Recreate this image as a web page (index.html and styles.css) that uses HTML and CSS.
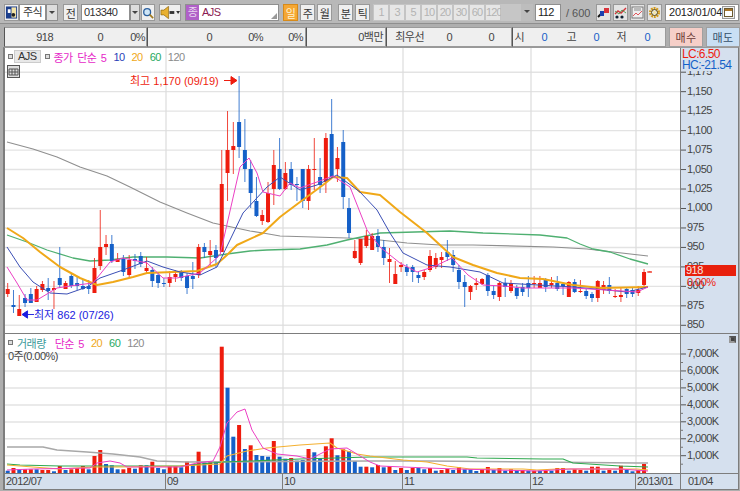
FILE: index.html
```html
<!DOCTYPE html>
<html lang="ko">
<head>
    <meta charset="UTF-8">
    <title>AJS 013340</title>
    <link rel="stylesheet" href="styles.css">
</head>
<body>
    <div class="toolbar">
        <button class="tool icon-book" title="종목">
            <svg width="14" height="15" viewBox="0 0 14 15"><rect x="1" y="1" width="12" height="13" fill="#1c3f8c"/><rect x="7" y="2" width="5" height="11" fill="#f4e3a6"/><path d="M3 4h3v4H3z" fill="#fff"/><circle cx="9" cy="10" r="2" fill="#222"/></svg>
        </button>
        <div class="field market">주식</div>
        <button class="arrow-btn market-arrow"></button>
        <button class="tool prev">전</button>
        <div class="field code">013340</div>
        <button class="arrow-btn code-arrow"></button>
        <button class="tool search">
            <svg width="14" height="14" viewBox="0 0 14 14"><circle cx="6" cy="6" r="4" fill="#cfe6f7" stroke="#2a5f9e" stroke-width="1.5"/><path d="M9 9l4 4" stroke="#a07a20" stroke-width="2"/></svg>
        </button>
        <button class="tool speaker">
            <svg width="21" height="13" viewBox="0 0 21 13"><path d="M1 4h3l5-4v13l-5-4H1z" fill="#e8b030" stroke="#8a6410" stroke-width=".7"/><path d="M10 5h5v3h-5z" fill="#333"/><path d="M17 5h4l-2 3z" fill="#333"/></svg>
        </button>
        <div class="field name"><span class="name-tag">종</span><span class="name-text">AJS</span><i class="grip"></i></div>
        <div class="periods">
            <button class="tool period on">일</button>
            <button class="tool period">주</button>
            <button class="tool period">월</button>
        </div>
        <div class="periods minutes">
            <button class="tool period">분</button>
            <button class="tool period">틱</button>
        </div>
        <div class="steps">
            <span>1</span><span>3</span><span>5</span><span>10</span><span>20</span><span>30</span><span>60</span><span>120</span>
        </div>
        <div class="step-box"></div>
        <button class="arrow-btn step-arrow"></button>
        <div class="field count">112</div>
        <span class="total">/ 600</span>
        <button class="tool small">
            <svg width="13" height="13" viewBox="0 0 13 13"><path d="M1 11l4-4" stroke="#111" stroke-width="2"/><rect x="3" y="5" width="4" height="5" fill="#1a3fb0"/><rect x="7" y="2" width="5" height="5" fill="#d8323a"/></svg>
        </button>
        <button class="tool small">
            <svg width="13" height="13" viewBox="0 0 13 13"><path d="M1 8l3-3 3 2 5-5" fill="none" stroke="#d8323a" stroke-width="1.4"/><path d="M1 5l4 3 3-4 4 3" fill="none" stroke="#3a8a3a" stroke-width=".8"/><circle cx="3" cy="11" r="1.6" fill="#123"/><circle cx="8" cy="11" r="1.6" fill="#123"/></svg>
        </button>
        <button class="tool small">
            <svg width="13" height="13" viewBox="0 0 13 13"><rect x="1" y="1" width="11" height="11" fill="#eee" stroke="#777"/><rect x="3" y="1" width="7" height="4" fill="#bbb"/><path d="M2 10l3-3 2 2 4-4" fill="none" stroke="#e0555a"/></svg>
        </button>
        <button class="tool small">
            <svg width="13" height="13" viewBox="0 0 13 13"><circle cx="6.500" cy="6.500" r="4.300" fill="none" stroke="#d59a18" stroke-width="2.400" stroke-dasharray="1.800 .9"/><circle cx="6.500" cy="6.500" r="3" fill="none" stroke="#5a4a10"/><circle cx="6.500" cy="6.500" r="1.500" fill="#f6e7a0"/></svg>
        </button>
        <div class="field date">2013/01/04
            <button class="tool calendar">
                <svg width="9" height="9" viewBox="0 0 9 9"><rect x=".5" y=".5" width="8" height="8" fill="#fff" stroke="#6b5a30"/><rect x="1" y="1" width="7" height="2" fill="#a9762a"/></svg>
            </button>
        </div>
    </div>

    <div class="quote-row">
        <div class="quote cell-a"><span>918</span><span>0</span><span>0%</span></div>
        <div class="quote cell-b"><span>0</span><span>0%</span><span>0%</span></div>
        <div class="quote cell-c"><span>0백만</span></div>
        <div class="quote cell-d"><span>최우선</span><span>0</span><span>0</span></div>
        <div class="quote cell-e">
            <span>시</span><span class="blue">0</span><span>고</span><span class="blue">0</span><span>저</span><span class="blue">0</span>
        </div>
        <button class="trade buy">매수</button>
        <button class="trade sell">매도</button>
    </div>

    <div class="chart">
        <div class="pane price-pane">
            <svg class="plot" id="pricePlot" viewBox="5 48 675 285"></svg>
            <div class="legend">
                <i class="dot"></i><span class="ticker">AJS</span><i class="dot"></i>
                <span class="c-pink">종가 단순 5</span>
                <span class="c-blue">10</span>
                <span class="c-orange">20</span>
                <span class="c-green">60</span>
                <span class="c-grey">120</span>
            </div>
            <div class="grid-btn">
                <svg width="13" height="13" viewBox="0 0 13 13"><rect x=".5" y=".5" width="12" height="12" fill="#ddd" stroke="#555"/><path d="M2 4h9v6H2zM5 4v6M8 4v6M2 7h9" fill="none" stroke="#555"/></svg>
            </div>
            <div class="mark mark-high">최고 1,170 (09/19)<svg width="13" height="9" viewBox="0 0 13 9"><path d="M0 4.500h8M7 .5l6 4-6 4z" fill="#ee1c0e" stroke="#ee1c0e"/></svg></div>
            <div class="mark mark-low"><svg width="12" height="9" viewBox="0 0 13 9"><path d="M13 4.500H5M6 .5L0 4.500l6 4z" fill="#1a1ae0" stroke="#1a1ae0"/></svg>최저 862 (07/26)</div>
        </div>
        <div class="axis price-axis">
            <svg class="plot" id="priceAxis" viewBox="681 48 57 285"></svg>
            <div class="hc-lc"><div class="lc">LC:6.50</div><div class="hc">HC:-21.54</div></div>
            <div class="last-price">918</div>
            <div class="last-rate">0.00%</div>
        </div>

        <div class="pane volume-pane">
            <svg class="plot" id="volumePlot" viewBox="5 334 675 139"></svg>
            <div class="legend">
                <i class="dot"></i>
                <span class="c-teal">거래량</span>
                <span class="c-pink">단순 5</span>
                <span class="c-orange">20</span>
                <span class="c-green">60</span>
                <span class="c-grey">120</span>
            </div>
            <div class="volume-now">0주(0.00%)</div>
        </div>
        <div class="axis volume-axis">
            <svg class="plot" id="volumeAxis" viewBox="681 334 57 139"></svg>
            <i class="max-btn"></i>
        </div>

        <div class="time-axis">
            <span>2012/07</span><span>09</span><span>10</span><span>11</span><span>12</span><span>2013/01</span>
        </div>
        <div class="time-end">01/04</div>
    </div>

    <script src="chart.js"></script>
</body>
</html>
```

FILE: styles.css
```css
:root {
    --panel: #d5e0ee;
    --line: #7d7d7d;
    --red: #ee1c0e;
    --blue: #1560c8;
}

* {
    box-sizing: border-box;
    margin: 0;
    padding: 0;
}

body {
    width: 740px;
    height: 491px;
    overflow: hidden;
    background: #aeaeae;
    font-family: "Liberation Sans", "Noto Sans CJK KR", sans-serif;
    font-size: 11px;
    letter-spacing: -.55px;
    color: #333;
}

button {
    font: inherit;
    letter-spacing: inherit;
    color: inherit;
}

/* top toolbar */
.toolbar {
    display: flex;
    align-items: center;
    height: 24px;
    padding: 3px 0 1px 4px;
    background: #b8b8b8;
    border-bottom: 1px solid #8e8e8e;
}

.tool {
    display: flex;
    align-items: center;
    justify-content: center;
    height: 17px;
    background: #efefef;
    border: 1px solid #999;
}

.field {
    height: 17px;
    line-height: 15px;
    background: #fff;
    border: 1px solid #8f8f8f;
    white-space: nowrap;
}

.arrow-btn {
    position: relative;
    height: 17px;
    background: #ddd;
    border: 1px solid #8f8f8f;
}

.arrow-btn::after {
    content: "";
    position: absolute;
    left: 50%;
    top: 6px;
    margin-left: -3px;
    border: 3px solid transparent;
    border-top: 3px solid #444;
}

.icon-book { width: 15px; }
.market { width: 27px; padding-left: 3px; }
.market-arrow { width: 12px; }
.prev { width: 15px; margin-left: 5px; }
.code { width: 49px; margin-left: 3px; padding-left: 2px; }
.code-arrow { width: 10px; }
.search { width: 14px; margin-left: 1px; }
.speaker { width: 22px; margin-left: 4px; }

.name {
    position: relative;
    display: flex;
    width: 94px;
    margin-left: 4px;
    color: #8a1a52;
}

.name-tag {
    width: 13px;
    background: #b060c8;
    color: #e8d5ee;
    text-align: center;
}

.name-text { margin-left: 3px; }

.grip {
    position: absolute;
    right: 1px;
    bottom: 1px;
    border: 3px solid transparent;
    border-right-color: #999;
    border-bottom-color: #999;
}

.periods { display: flex; gap: 2px; margin-left: 4px; }
.minutes { margin-left: 6px; }
.period { width: 15px; }
.period.on { background: #f5a733; color: #fff3d0; border-color: #d68a1a; }

.steps { display: flex; margin-left: 3px; color: #b3b3b3; letter-spacing: -.9px; }

.steps span {
    width: 16px;
    height: 17px;
    line-height: 15px;
    text-align: center;
    white-space: nowrap;
    background: #e6e6e6;
    border: 1px solid #c4c4c4;
}

.step-box { width: 20px; height: 17px; background: #c6c6c6; }
.step-arrow { width: 12px; background: #bdbdbd; border: 0; }
.count { width: 26px; margin-left: 2px; padding-left: 2px; color: #222; }
.total { width: 30px; margin-left: 5px; color: #555; letter-spacing: 0; white-space: nowrap; }
.small { width: 15px; margin-right: 2px; background: #e4e4e4; }

.date {
    position: relative;
    width: 74px;
    margin-left: 1px;
    padding-left: 3px;
    letter-spacing: -.2px;
    color: #222;
}

.calendar {
    position: absolute;
    right: 3px;
    top: 1px;
    width: 13px;
    height: 13px;
}

/* quote strip */
.quote-row {
    display: flex;
    height: 20px;
    margin-top: 3px;
    padding-left: 4px;
}

.quote {
    display: flex;
    height: 20px;
    line-height: 18px;
    background: #efefef;
    border: 1px solid #9a9a9a;
    border-left-color: #555;
    color: #444;
}

.quote span { text-align: right; white-space: nowrap; }
.quote .blue { color: var(--blue); }

.cell-a { width: 143px; }
.cell-a span:nth-child(1) { width: 48px; }
.cell-a span:nth-child(2) { width: 50px; }
.cell-a span:nth-child(3) { width: 42px; }

.cell-b { width: 159px; }
.cell-b span:nth-child(1) { width: 64px; }
.cell-b span:nth-child(2) { width: 51px; }
.cell-b span:nth-child(3) { width: 40px; }

.cell-c { width: 80px; justify-content: flex-end; padding-right: 2px; }

.cell-d { width: 126px; padding-left: 5px; }
.cell-d span:nth-child(1) { width: 32px; }
.cell-d span:nth-child(2) { width: 28px; }
.cell-d span:nth-child(3) { width: 42px; }

.cell-e { width: 154px; }
.cell-e span:nth-child(1) { width: 11px; }
.cell-e span:nth-child(2) { width: 23px; }
.cell-e span:nth-child(3) { width: 29px; }
.cell-e span:nth-child(4) { width: 23px; }
.cell-e span:nth-child(5) { width: 27px; }
.cell-e span:nth-child(6) { width: 24px; }

.trade {
    width: 34px;
    height: 20px;
    border: 1px solid #a0a0a0;
    letter-spacing: .5px;
}

.buy { margin-left: 3px; background: #f6cfc8; color: #6a3a35; }
.sell { margin-left: 3px; background: #c9dff4; color: #35506a; }

/* chart */
.chart {
    display: grid;
    grid-template-columns: 675px 58px;
    grid-template-rows: 286px 140px 15px;
    width: 736px;
    height: 443px;
    margin-left: 3px;
    border: 1px solid var(--line);
    border-top-color: #999;
    border-left-width: 2px;
    background: #fff;
}

.pane,
.axis {
    position: relative;
    border-bottom: 1px solid var(--line);
}

.axis {
    background: var(--panel);
    border-left: 1px solid var(--line);
}

.plot {
    display: block;
    width: 100%;
    height: 100%;
}

.axis text {
    font-family: "Liberation Sans", "Noto Sans CJK KR", sans-serif;
    font-size: 11px;
    letter-spacing: -.55px;
    fill: #444;
}

.legend {
    position: absolute;
    left: 3px;
    top: 2px;
    display: flex;
    align-items: center;
    gap: 7px;
    height: 13px;
    word-spacing: 2px;
}

.dot {
    width: 5px;
    height: 5px;
    background: #ddd;
    border: 1px solid #777;
}

.ticker {
    margin: 0 -3px 0 -6px;
    padding: 0 3px;
    background: #e8e8e8;
    border: 1px solid #ccc;
    line-height: 11px;
}

.dot + .c-pink,
.dot + .c-teal { margin-left: -3px; }
.c-teal + .c-pink { margin-left: 2px; }

.c-pink { color: #e628c8; }
.c-blue { color: #2a3fb8; }
.c-orange { color: #f0a820; }
.c-green { color: #28a860; }
.c-grey { color: #8a8a8a; }
.c-teal { color: #3a9a9a; }

.grid-btn { position: absolute; left: 2px; top: 17px; line-height: 0; }

.mark {
    position: absolute;
    display: flex;
    align-items: center;
    gap: 5px;
    letter-spacing: 0;
    white-space: nowrap;
}

.mark-high { left: 125px; top: 24px; color: var(--red); }
.mark-low { left: 17px; top: 258px; gap: 0; color: #1a1ae0; }

.hc-lc {
    position: absolute;
    left: 0;
    top: 1px;
    width: 100%;
    padding-left: 1px;
    background: var(--panel);
    font-size: 12px;
    letter-spacing: -.6px;
    line-height: 11px;
}

.lc { color: var(--red); }
.hc { color: var(--blue); }

.last-price {
    position: absolute;
    left: 4px;
    top: 217px;
    width: 51px;
    height: 11px;
    padding-left: 1px;
    background: #e8200c;
    color: #f8e8e0;
    line-height: 11px;
}

.last-rate {
    position: absolute;
    left: 6px;
    top: 228px;
    color: var(--red);
    line-height: 12px;
}

.volume-now { position: absolute; left: 3px; top: 13px; color: #444; }

.max-btn {
    position: absolute;
    right: 2px;
    top: 2px;
    width: 7px;
    height: 7px;
    background: #444;
    border: 2px solid #555;
    border-color: #555 #555 #999 #999;
}

.time-axis {
    display: grid;
    grid-template-columns: 161px 117px 120px 128px 105px 44px;
    background: var(--panel);
    line-height: 15px;
}

.time-axis span {
    padding-left: 1px;
    border-right: 1px solid var(--line);
    color: #444;
    white-space: nowrap;
}

.time-axis span:last-child { border-right: 0; }
.time-end { padding-left: 7px; background: var(--panel); border-left: 1px solid var(--line); line-height: 15px; color: #444; }
```

FILE: chart.js
```js
// candles as [colour, high y, body top y, body bottom y, low y], in page pixels
const candles = [
    ['r',283,289,294,297],['b',290,305,307,313],['r',295,309,316,316],['b',294,298,303,307],['b',288,294,303,303],
    ['r',286,289,302,302],['r',281,284,290,292],['b',278,288,291,300],['r',281,288,290,309],['b',247,278,285,288],
    ['r',281,283,289,289],['b',274,276,286,288],['b',277,283,286,290],['b',280,286,289,290],['b',280,286,289,294],
    ['r',258,268,293,293],['r',210,247,266,270],['r',235,244,247,255],['b',235,244,261,263],['r',253,259,262,262],
    ['b',255,259,272,276],['r',255,260,275,277],['b',254,259,261,269],['b',252,256,264,267],['r',257,268,271,274],
    ['b',267,270,281,287],['b',272,275,283,288],['b',278,283,284,287],['r',271,277,283,287],['r',270,274,277,282],
    ['b',270,272,278,281],['b',273,276,288,294],['b',262,276,279,289],['r',244,247,275,278],['b',243,247,252,258],
    ['r',240,251,255,267],['b',245,250,258,267],['r',150,184,252,252],['r',111,150,173,201],['r',122,146,150,174],
    ['b',76,122,147,158],['b',119,150,169,182],['b',160,169,193,208],['b',177,201,216,217],['r',210,215,221,225],
    ['r',182,193,222,223],['r',150,165,189,205],['b',138,169,189,190],['r',162,173,189,190],['b',162,169,185,190],
    ['b',177,184,185,201],['b',169,169,201,208],['r',165,169,201,210],['r',138,169,170,190],['b',158,177,185,193],
    ['r',133,138,182,193],['b',99,134,177,177],['r',147,158,169,182],['b',130,142,197,209],['b',198,208,233,238],
    ['r',240,251,258,259],['r',239,239,263,265],['r',230,236,246,248],['r',233,236,250,250],['b',229,236,247,252],
    ['b',240,247,258,265],['r',248,259,262,283],['r',261,274,284,284],['r',262,265,267,272],['b',264,267,272,276],
    ['b',265,267,272,282],['b',272,275,278,283],['r',270,272,277,280],['r',250,256,270,272],['r',253,258,267,269],
    ['r',252,257,260,268],['b',240,252,257,261],['b',250,255,265,272],['b',265,270,282,289],['b',275,282,287,307],
    ['r',285,286,292,300],['r',278,283,285,290],['r',278,279,284,285],['b',273,275,291,296],['b',286,291,295,299],
    ['r',282,283,297,301],['b',278,283,287,297],['r',280,283,291,293],['b',285,288,296,299],['b',283,287,292,296],
    ['b',276,283,288,297],['r',276,283,284,288],['r',276,283,288,288],['b',278,280,287,292],['r',277,283,285,288],
    ['b',276,283,289,291],['b',283,284,286,295],['r',281,282,297,297],['b',279,282,292,293],['r',280,291,292,293],
    ['b',289,291,296,299],['b',292,294,298,302],['r',280,281,298,302],['r',281,285,290,294],['b',277,285,291,294],
    ['r',289,296,297,298],['r',288,295,297,302],['b',288,289,294,298],['b',287,290,294,297],['r',286,290,293,296],
    ['r',269,272,285,288],['r',271,271.5,272.5,272]
];

const priceLines = [
    { color: '#8f8f8f', width: 1.1, points: [7,142,33,149,57,157,80,167,107,176,130,187,160,202,187,213,213,223,250,231,263,233,280,236,313,237,347,238,380,240,407,243,440,245,473,245,553,247,587,249,613,252,648,256] },
    { color: '#4fb071', width: 1.3, points: [7,235,27,242,47,250,73,258,90,261,110,260,133,257,167,257,200,258,227,254,250,251,267,250,300,249,327,245,347,240,380,233,450,231,483,233,540,235,567,238,580,244,593,249,610,252,630,259,648,264] },
    { color: '#f0a818', width: 2, points: [7,228,23,238,40,252,60,267,80,278,97,285,113,282,133,277,147,273,173,272,197,271,217,264,227,255,237,245,263,233,280,217,300,202,323,185,333,177,347,178,360,192,380,195,400,212,427,233,453,257,473,265,497,273,520,278,543,279,573,285,600,288,648,287] },
    { color: '#3b4fb5', width: 1, points: [7,247,20,267,33,282,50,293,67,294,87,287,100,278,123,270,147,261,163,267,180,272,200,275,217,267,230,240,243,213,267,187,280,177,300,190,317,185,337,175,360,192,377,210,390,233,403,253,427,265,450,267,480,272,503,283,573,287,607,290,627,292,648,287] },
    { color: '#ec40c4', width: 1, points: [7,267,17,283,27,300,37,300,57,288,77,285,93,283,110,262,123,258,147,263,163,278,177,278,200,273,220,255,240,167,249,158,257,173,263,192,280,196,290,183,300,188,317,182,333,176,350,187,367,230,380,247,400,263,417,272,433,267,452,258,468,275,483,285,503,286,523,288,573,288,607,290,637,292,648,287] }
];

// volume bars as [colour, top y]
const volumes = [
    ['b',470.7],['r',468],['b',469.3],['r',469.3],['r',469.3],['b',469.3],['r',470],['r',470],['b',471.3],['r',466],
    ['b',470],['r',469.3],['r',468],['r',466],['b',469.3],['r',456],['r',450],['b',464],['b',465.3],['b',469.3],
    ['r',469.3],['r',468],['b',468.7],['r',465.3],['b',465.3],['r',461.7],['b',468],['b',469.3],['r',466],['r',466],
    ['b',467.3],['r',461.7],['b',464],['r',451.7],['b',462.3],['r',461],['b',461],['r',346.7],['b',387.7],['b',436.7],
    ['r',425],['b',449],['r',445.3],['b',455],['b',456],['b',456.7],['r',441],['b',456.7],['b',458.7],['r',458],
    ['b',460.7],['b',460],['r',449],['b',452.3],['b',458],['r',446.3],['r',438.3],['b',455.3],['r',449.3],['b',451.3],
    ['b',461],['b',466.7],['r',466.7],['b',467.3],['r',465],['b',467.3],['r',466],['b',470],['r',468],['b',470],
    ['r',468],['b',468],['b',469.3],['r',468],['b',470.7],['r',470],['r',469],['b',470],['r',467.3],['b',469.3],
    ['b',469.3],['b',471],['r',469.3],['r',467],['b',470],['r',468],['b',470.7],['r',469.3],['b',470],['r',470],
    ['b',470.7],['r',470.7],['b',470.7],['r',470.7],['b',470.7],['r',468],['r',468],['b',470.7],['r',469.3],['r',470],
    ['b',470.7],['r',466.7],['r',466.7],['b',470.7],['r',470],['b',470.7],['r',465.7],['b',470],['b',471.3],['r',470],
    ['r',464]
];

const volumeLines = [
    { color: '#a8a8a8', width: 1.6, points: [7,447,43,447,57,450,87,452,113,454,140,457,157,461,187,462,370,461,427,461,537,462,637,463,648,463] },
    { color: '#2ea84e', width: 1.1, points: [7,464,20,465,60,466,120,466,180,466,223,462,250,461,300,459,370,457,450,457,467,457,477,458,543,459,563,459,573,463,620,466,648,467] },
    { color: '#f4b030', width: 1.1, points: [7,465,33,467,60,469,93,467,120,467,180,466,220,464,227,456,247,451,267,448,300,445,330,443,337,448,357,454,370,456,403,460,427,462,447,466,470,469,523,469,537,470,557,469,637,469,648,470] },
    { color: '#ec40c4', width: 1, points: [7,470,33,469,90,468,97,463,110,461,120,463,127,467,167,467,180,467,197,463,213,461,220,447,227,423,237,412,245,409,252,430,263,448,277,454,297,456,310,459,330,449,347,448,370,462,380,466,427,468,457,469,537,471,570,469,620,469,648,471] }
];

const NS = 'http://www.w3.org/2000/svg';
const candleX = i => 7.7 + 5.785 * i;
const PRICE_TOP = 72.2;
const PRICE_STEP = 19.47;

function add(svg, tag, attrs, text) {
    const el = document.createElementNS(NS, tag);
    for (const key in attrs) el.setAttribute(key, attrs[key]);
    if (text) el.textContent = text;
    svg.appendChild(el);
}

function drawGrid(svg, rows, top, bottom) {
    rows.forEach(y => add(svg, 'line', { x1: 5, x2: 680, y1: y, y2: y, stroke: '#e3e3e3', 'stroke-width': 1.4 }));
    [166, 283, 403, 531, 636].forEach(x => {
        add(svg, 'line', { x1: x, x2: x, y1: top, y2: bottom, stroke: '#dcdcdc', 'stroke-width': 1.2 });
    });
}

function drawLines(svg, lines) {
    lines.forEach(line => {
        add(svg, 'polyline', {
            points: line.points.join(' '),
            fill: 'none',
            stroke: line.color,
            'stroke-width': line.width,
            'stroke-linejoin': 'round'
        });
    });
}

function drawPrice() {
    const svg = document.getElementById('pricePlot');
    const rows = [];
    for (let i = 0; i < 14; i++) rows.push(PRICE_TOP + i * PRICE_STEP);
    drawGrid(svg, rows, 48, 333);

    drawLines(svg, priceLines.slice(0, 2));
    candles.forEach((c, i) => {
        const x = candleX(i);
        const color = c[0] === 'r' ? '#ee1c0e' : '#1560c8';
        add(svg, 'line', { x1: x, x2: x, y1: c[1], y2: c[4], stroke: color, 'stroke-width': 1, opacity: .8 });
        add(svg, 'rect', { x: x - 2, y: c[2], width: 4, height: Math.max(c[3] - c[2], 1), fill: color });
    });
    drawLines(svg, priceLines.slice(2));
    add(svg, 'line', { x1: 647, x2: 652, y1: 272, y2: 272, stroke: '#ee5040', 'stroke-width': 1 });
}

function drawVolume() {
    const svg = document.getElementById('volumePlot');
    const rows = [354, 371, 388, 405, 422, 438.7, 455.7];
    drawGrid(svg, rows, 334, 473);

    volumes.forEach((v, i) => {
        const x = candleX(i);
        add(svg, 'rect', { x: x - 2, y: v[1], width: 4, height: 473 - v[1], fill: v[0] === 'r' ? '#ee1c0e' : '#1560c8' });
    });
    drawLines(svg, volumeLines);
}

function drawAxis(id, labels, minorStep) {
    const svg = document.getElementById(id);
    labels.forEach(l => {
        add(svg, 'line', { x1: 681, x2: 686, y1: l.y, y2: l.y, stroke: '#555' });
        add(svg, 'text', { x: 687, y: l.y + 3 }, l.text);
        if (minorStep) add(svg, 'line', { x1: 681, x2: 683, y1: l.y + minorStep, y2: l.y + minorStep, stroke: '#777' });
    });
}

const priceLabels = [];
for (let p = 1175, y = PRICE_TOP; p >= 850; p -= 25, y += PRICE_STEP) {
    priceLabels.push({ y: y, text: p >= 1000 ? '1,' + String(p - 1000).padStart(3, '0') : String(p) });
}
const volumeLabels = [7, 6, 5, 4, 3, 2, 1].map((n, i) => ({ y: 354 + i * 16.95, text: n + ',000K' }));

drawPrice();
drawVolume();
drawAxis('priceAxis', priceLabels);
drawAxis('volumeAxis', volumeLabels, 8.5);
```
